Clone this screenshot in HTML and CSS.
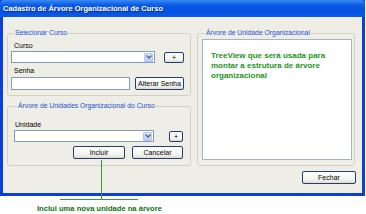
FILE: index.html
```html
<!DOCTYPE html>
<html lang="pt-BR">
<head>
    <meta charset="UTF-8">
    <meta name="viewport" content="width=device-width, initial-scale=1.0">
    <title>Cadastro de Árvore Organizacional de Curso</title>
    <link rel="stylesheet" href="styles.css">
</head>
<body>
    <div class="page">
        <!-- Janela -->
        <div class="window">
            <div class="titlebar">Cadastro de Árvore Organizacional de Curso</div>

            <div class="window-body">
                <div class="main">
                    <div class="left">
                        <!-- Selecionar Curso -->
                        <fieldset class="group group-curso">
                            <legend>Selecionar Curso</legend>
                            <div class="label">Curso</div>
                            <div class="row">
                                <div class="combo combo-curso">
                                    <span class="drop">
                                        <svg width="6" height="4" viewBox="0 0 6 4"><polyline points="0.5,0.5 3,3 5.5,0.5" fill="none" stroke="#4d6185" stroke-width="1.3"/></svg>
                                    </span>
                                </div>
                                <button class="btn btn-plus">+</button>
                            </div>
                            <div class="label label-senha">Senha</div>
                            <div class="row">
                                <div class="textbox"></div>
                                <button class="btn btn-senha">Alterar Senha</button>
                            </div>
                        </fieldset>

                        <!-- Unidades -->
                        <fieldset class="group group-unidades">
                            <legend>Árvore de Unidades Organizacional do Curso</legend>
                            <div class="label">Unidade</div>
                            <div class="row">
                                <div class="combo combo-unidade">
                                    <span class="drop">
                                        <svg width="6" height="4" viewBox="0 0 6 4"><polyline points="0.5,0.5 3,3 5.5,0.5" fill="none" stroke="#4d6185" stroke-width="1.3"/></svg>
                                    </span>
                                </div>
                                <button class="btn btn-plus btn-plus-small">+</button>
                            </div>
                            <div class="row row-actions">
                                <button class="btn btn-incluir">Incluir</button>
                                <button class="btn btn-cancelar">Cancelar</button>
                            </div>
                        </fieldset>
                    </div>

                    <!-- TreeView -->
                    <fieldset class="group group-tree">
                        <legend>Árvore de Unidade Organizacional</legend>
                        <div class="tree">TreeView que será usada para montar a estrutura de árvore organizacional</div>
                    </fieldset>
                </div>

                <div class="footer">
                    <button class="btn btn-fechar">Fechar</button>
                </div>
            </div>
        </div>

        <!-- Anotação -->
        <div class="callout-line"></div>
        <div class="callout">
            <div class="callout-rule"></div>
            <div class="callout-text">Inclui uma nova unidade na árvore</div>
        </div>
    </div>
</body>
</html>
```

FILE: styles.css
```css
/* Base */
* {
    box-sizing: border-box;
    margin: 0;
    padding: 0;
}

body {
    background: #ffffff;
    font-family: 'Liberation Sans', Arial, sans-serif;
    font-size: 7px;
    color: #000;
}

.page {
    position: relative;
    width: 366px;
    height: 214px;
}

/* Window */
.window {
    width: 365px;
    height: 196px;
    background: #0b3fd6;
    padding: 0 3px 3px 3px;
}

.titlebar {
    height: 17px;
    margin: 0 -3px;
    padding-left: 3px;
    background: linear-gradient(#3b8af3, #0a5be6 30%, #0550e0 70%, #0a5ee8);
    color: #fff;
    font-weight: bold;
    font-size: 7.5px;
    line-height: 17px;
    text-shadow: 1px 1px 0 #0a2a8a;
    border-radius: 4px 4px 0 0;
}

.window-body {
    height: 176px;
    background: #efeee6;
    padding: 12px 6px 0 4px;
}

.main {
    display: flex;
    gap: 6px;
}

.left {
    width: 184px;
    display: flex;
    flex-direction: column;
    gap: 6px;
}

/* Group boxes */
.group {
    border: 1px solid #d3d0c1;
    border-radius: 3px;
    min-width: 0;
}

.group legend {
    color: #1a4fd4;
    font-size: 6.8px;
    line-height: 8px;
    padding: 0 1px;
    margin-left: 3px;
}

.group-curso {
    padding: 5px 6px 5px 3px;
}

.group-unidades {
    padding: 11px 7px 6px 6px;
}

.group-tree {
    width: 158px;
    padding: 2px 2px 3px 4px;
}

.label {
    line-height: 8px;
    padding-left: 3px;
    margin-bottom: 1px;
}

.label-senha {
    margin-top: 4px;
    margin-bottom: 2px;
}

.group-unidades .label {
    padding-left: 1px;
}

.row {
    display: flex;
    align-items: center;
    justify-content: space-between;
}

/* Inputs */
.combo,
.textbox {
    background: #fff;
    border: 1px solid #7f9db9;
}

.combo {
    height: 12px;
    display: flex;
    justify-content: flex-end;
    align-items: center;
    padding-right: 1px;
}

.combo-curso {
    width: 144px;
}

.combo-unidade {
    width: 140px;
}

.drop {
    width: 9px;
    height: 9px;
    background: linear-gradient(#dce6fb, #bccdf5);
    border: 1px solid #b4c6f0;
    border-radius: 1px;
    display: flex;
    align-items: center;
    justify-content: center;
}

.textbox {
    width: 119px;
    height: 13px;
}

/* Buttons */
.btn {
    font-family: 'Liberation Sans', Arial, sans-serif;
    font-size: 7px;
    color: #000;
    background: linear-gradient(#ffffff, #f3f3ee 70%, #dcdbd2);
    border: 1px solid #233f6e;
    border-radius: 2px;
    height: 13px;
    line-height: 11px;
}

.btn-plus {
    width: 20px;
    height: 11px;
    line-height: 9px;
}

.btn-plus-small {
    width: 14px;
}

.btn-senha {
    width: 49px;
}

.row-actions {
    margin-top: 4px;
    justify-content: flex-end;
    gap: 7px;
}

.btn-incluir {
    width: 52px;
}

.btn-cancelar {
    width: 51px;
}

/* TreeView */
.tree {
    height: 121px;
    background: #fff;
    border: 1px solid #a9b3bd;
    padding: 11px 8px;
    color: #1d961d;
    font-weight: bold;
    font-size: 8px;
    line-height: 10px;
}

.footer {
    display: flex;
    justify-content: flex-end;
    margin-top: 5px;
}

.btn-fechar {
    width: 54px;
}

/* Annotation */
.callout-line {
    position: absolute;
    left: 101px;
    top: 160px;
    width: 1px;
    height: 40px;
    background: #3a9a3a;
}

.callout {
    padding-top: 3px;
}

.callout-rule {
    width: 78px;
    height: 1px;
    margin-left: 60px;
    background: #3a9a3a;
}

.callout-text {
    margin-top: 4px;
    padding-left: 37px;
    color: #117411;
    font-weight: bold;
    font-size: 7.6px;
    line-height: 9px;
}
```
